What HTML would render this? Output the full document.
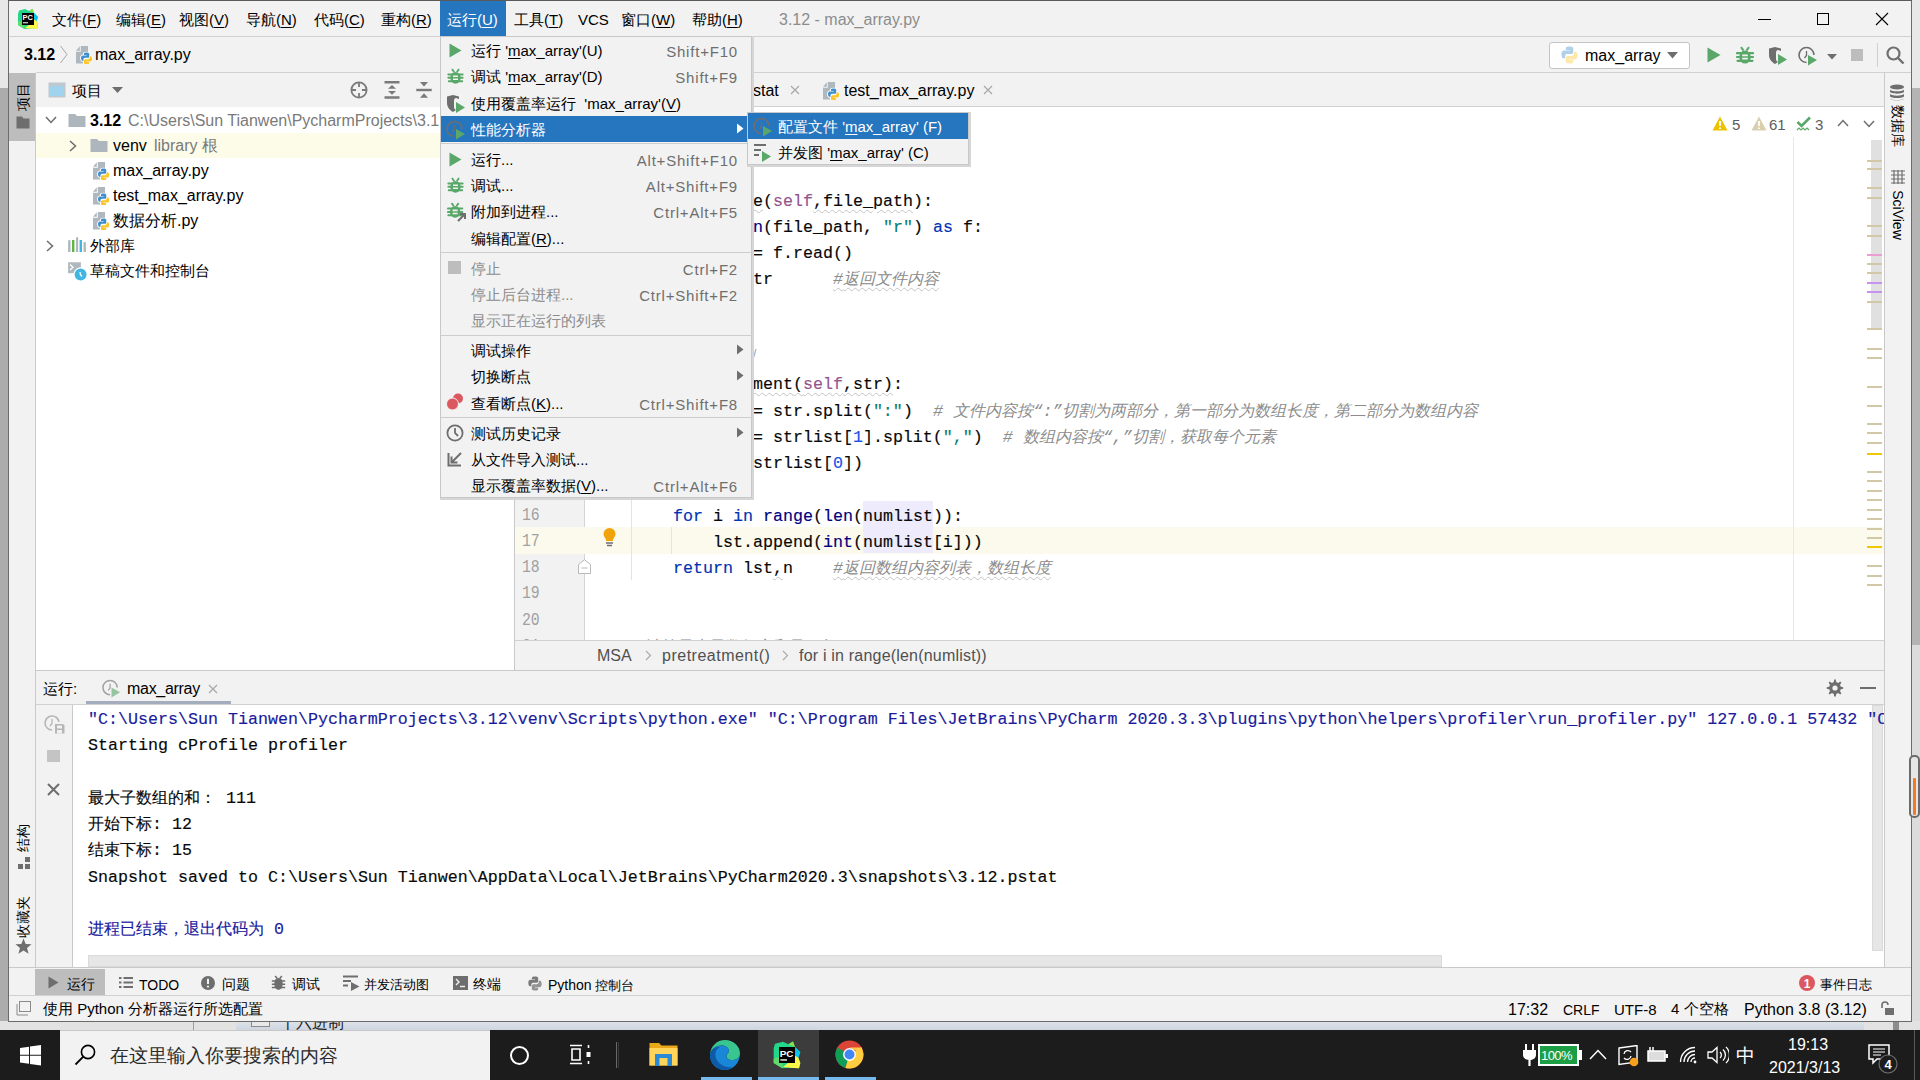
<!DOCTYPE html>
<html><head><meta charset="utf-8">
<style>
*{box-sizing:border-box;margin:0;padding:0}
html,body{width:1920px;height:1080px;overflow:hidden;background:#e9e9e9}
body{position:relative;font-family:"Liberation Sans",sans-serif;font-size:15px;color:#000}
.a{position:absolute}
.mono{font-family:"Liberation Mono",monospace}
.t{position:absolute;white-space:pre;line-height:1}
.u{position:absolute;white-space:pre;font-size:15px;line-height:20px;margin-top:1px}
u{text-decoration:underline;text-underline-offset:2px}
.code{position:absolute;white-space:pre;font-size:16.67px;line-height:26.25px;color:#080808;-webkit-text-stroke:0.15px currentColor}
.gut{color:#a0a0a0;font-size:18px;-webkit-text-stroke:0;margin-top:-2px;transform:scaleX(0.82);transform-origin:0 0}
.k{color:#0033b3}.b{color:#000080}.s{color:#0b7b77}.n{color:#1750eb}.c{color:#8c8c8c;font-style:italic;-webkit-text-stroke:0}.self{color:#94558d}.fn{color:#080808}
.hl{background:#edebfc}
.w{text-decoration:underline wavy #c4c4c4;text-decoration-thickness:1px;text-underline-offset:3px}
.cj{font-size:16px}
.mi{position:absolute;left:471px;white-space:pre;font-size:15px;line-height:20px;margin-top:1px}
.ms{position:absolute;right:1182px;white-space:pre;font-size:15px;line-height:20px;color:#6e6e6e;margin-top:2px;letter-spacing:0.8px}
</style></head><body>
<!-- desktop strips -->
<div class="a" style="left:0;top:0;width:8px;height:88px;background:#e8e8e8"></div>
<div class="a" style="left:0;top:88px;width:8px;height:942px;background:#acacac"></div>
<div class="a" style="left:1912px;top:0;width:8px;height:88px;background:#e8e8e8"></div>
<div class="a" style="left:1912px;top:88px;width:8px;height:557px;background:#b4b4b4"></div>
<div class="a" style="left:1912px;top:645px;width:8px;height:385px;background:#dcdcdc"></div>
<div class="a" style="left:0;top:1021px;width:1920px;height:9px;background:#e2e2e2"></div>
<div class="a" style="left:236px;top:1021px;width:1628px;height:9px;background:linear-gradient(#dfe4ea,#cdd5df)"></div>
<div class="a" style="left:1893px;top:1021px;width:6px;height:9px;background:#8c8c8c"></div>
<div class="a" style="left:193px;top:1021px;width:1px;height:9px;background:#8aa0c8"></div>
<div class="a" style="left:251px;top:1021px;width:19px;height:6px;border:1px solid #8a8a8a;border-top:none;background:#e8e8e8"></div>
<div class="a" style="left:280px;top:1012px;width:120px;height:18px;overflow:hidden"><div class="u" style="left:0;top:0;font-size:16px;color:#222">十六进制</div></div>

<!-- window -->
<div class="a" id="win" style="left:8px;top:0;width:1904px;height:1022px;background:#f2f2f2;border:1px solid #6b6b6b;border-top:none"></div>
<!-- title bar bottom -->
<div class="a" style="left:9px;top:36px;width:1902px;height:1px;background:#d1d1d1"></div>
<!-- navbar bottom -->
<div class="a" style="left:36px;top:72px;width:1875px;height:1px;background:#d1d1d1"></div>
<!-- left stripe -->
<div class="a" style="left:35px;top:73px;width:1px;height:894px;background:#c9c9c9"></div>
<!-- right stripe -->
<div class="a" style="left:1884px;top:73px;width:1px;height:894px;background:#c9c9c9"></div>
<!-- project tree white -->
<div class="a" style="left:36px;top:107px;width:478px;height:563px;background:#fff"></div>
<!-- splitter -->
<div class="a" style="left:514px;top:73px;width:1px;height:597px;background:#c9c9c9"></div>
<!-- editor tabs bottom -->
<div class="a" style="left:515px;top:106px;width:1369px;height:1px;background:#d1d1d1"></div>
<!-- editor white -->
<div class="a" style="left:515px;top:107px;width:1369px;height:533px;background:#fff"></div>
<!-- gutter -->
<div class="a" style="left:515px;top:107px;width:69px;height:533px;background:#f2f2f2"></div>
<div class="a" style="left:584px;top:107px;width:1px;height:533px;background:#d5d5d5"></div>
<!-- editor breadcrumb -->
<div class="a" style="left:515px;top:640px;width:1369px;height:1px;background:#d1d1d1"></div>
<!-- run panel header -->
<div class="a" style="left:36px;top:670px;width:1848px;height:1px;background:#c9c9c9"></div>
<div class="a" style="left:36px;top:704px;width:1848px;height:1px;background:#d1d1d1"></div>
<!-- console -->
<div class="a" style="left:73px;top:705px;width:1811px;height:262px;background:#fff"></div>
<div class="a" style="left:72px;top:705px;width:1px;height:262px;background:#c9c9c9"></div>
<!-- bottom bar -->
<div class="a" style="left:9px;top:967px;width:1902px;height:1px;background:#c9c9c9"></div>
<div class="a" style="left:9px;top:995px;width:1902px;height:1px;background:#d1d1d1"></div>




<!-- ===== TITLE BAR ===== -->
<div class="a" style="left:8px;top:0;width:1904px;height:1px;background:#5a5a5a"></div>
<svg class="a" style="left:16px;top:7px" width="24" height="24" viewBox="0 0 24 24">
 <path d="M2 7 L3 3.5 L9 2 L13 4 L16.5 1.8 L18 6 L22 10 L20.5 14 L22 18 L21 22 L14 21.5 L8.5 22 L2 18 Z" fill="#21d789"/>
 <path d="M13 4 L16.5 1.8 L18 6 Z" fill="#8be04e"/>
 <path d="M18 6 L22 10 L20.5 14 L17 12 Z" fill="#07c3f2"/>
 <path d="M17 12 L20.5 14 L22 18 L21 22 L14 21.5 L9 21 L14 17 Z" fill="#fcf84a"/>
 <path d="M2 15 L7 13 L9 21 L8.5 22 L2 18 Z" fill="#62d96b"/>
 <rect x="6" y="6" width="12" height="12" fill="#000"/>
 <text x="6.6" y="13.2" font-family="Liberation Sans" font-weight="bold" font-size="7.4" fill="#fff">PC</text>
 <rect x="7" y="15" width="5" height="1.4" fill="#bbb"/>
</svg>
<div class="u" style="left:52px;top:9px">文件(<u>F</u>)</div>
<div class="u" style="left:116px;top:9px">编辑(<u>E</u>)</div>
<div class="u" style="left:179px;top:9px">视图(<u>V</u>)</div>
<div class="u" style="left:246px;top:9px">导航(<u>N</u>)</div>
<div class="u" style="left:314px;top:9px">代码(<u>C</u>)</div>
<div class="u" style="left:381px;top:9px">重构(<u>R</u>)</div>
<div class="a" style="left:440px;top:1px;width:66px;height:35px;background:#2675bf"></div>
<div class="u" style="left:447px;top:9px;color:#fff">运行(<u>U</u>)</div>
<div class="u" style="left:514px;top:9px">工具(<u>T</u>)</div>
<div class="u" style="left:578px;top:9px">VCS</div>
<div class="u" style="left:621px;top:9px">窗口(<u>W</u>)</div>
<div class="u" style="left:692px;top:9px">帮助(<u>H</u>)</div>
<div class="u" style="left:779px;top:9px;color:#8c8c8c;font-size:16px">3.12 - max_array.py</div>
<div class="a" style="left:1758px;top:19px;width:13px;height:1px;background:#000"></div>
<div class="a" style="left:1817px;top:13px;width:12px;height:12px;border:1px solid #000"></div>
<svg class="a" style="left:1875px;top:12px" width="14" height="14" viewBox="0 0 14 14"><path d="M1 1 L13 13 M13 1 L1 13" stroke="#000" stroke-width="1.1"/></svg>

<!-- ===== NAV BAR ===== -->
<div class="u" style="left:24px;top:44px;font-weight:bold;font-size:16px">3.12</div>
<svg class="a" style="left:59px;top:45px" width="10" height="19" viewBox="0 0 10 19"><path d="M1.5 1 L8 9.5 L1.5 18" stroke="#a8a8a8" fill="none" stroke-width="1"/></svg>
<svg class="a pyf" style="left:75px;top:45px" width="18" height="19" viewBox="0 0 18 19"><g>
   <path d="M5.8 1 H13 V18.5 H1 V6.8 H5.8 Z" fill="#aeb8be"/>
   <path d="M1 5.8 L4.8 1.3 V5.8 Z" fill="#aeb8be"/>
   <g transform="translate(5.3,7.2) scale(0.7)"><g stroke="#fff" stroke-width="2.6">
   <path d="M8.8 0.5 C5 0.5 5.3 2.2 5.3 2.2 V4 H9 V4.6 H3.6 C3.6 4.6 1 4.3 1 8.4 C1 12.5 3.3 12.3 3.3 12.3 H4.6 V10.4 C4.6 10.4 4.5 8.1 6.9 8.1 H10.6 C10.6 8.1 12.8 8.2 12.8 6 V2.4 C12.8 2.4 13.1 0.5 8.8 0.5 Z" fill="#3f8fcf"/>
   <path d="M9.2 17.5 C13 17.5 12.7 15.8 12.7 15.8 V14 H9 V13.4 H14.4 C14.4 13.4 17 13.7 17 9.6 C17 5.5 14.7 5.7 14.7 5.7 H13.4 V7.6 C13.4 7.6 13.5 9.9 11.1 9.9 H7.4 C7.4 9.9 5.2 9.8 5.2 12 V15.6 C5.2 15.6 4.9 17.5 9.2 17.5 Z" fill="#fcc62c"/></g><g>
   <path d="M8.8 0.5 C5 0.5 5.3 2.2 5.3 2.2 V4 H9 V4.6 H3.6 C3.6 4.6 1 4.3 1 8.4 C1 12.5 3.3 12.3 3.3 12.3 H4.6 V10.4 C4.6 10.4 4.5 8.1 6.9 8.1 H10.6 C10.6 8.1 12.8 8.2 12.8 6 V2.4 C12.8 2.4 13.1 0.5 8.8 0.5 Z" fill="#3f8fcf"/>
   <path d="M9.2 17.5 C13 17.5 12.7 15.8 12.7 15.8 V14 H9 V13.4 H14.4 C14.4 13.4 17 13.7 17 9.6 C17 5.5 14.7 5.7 14.7 5.7 H13.4 V7.6 C13.4 7.6 13.5 9.9 11.1 9.9 H7.4 C7.4 9.9 5.2 9.8 5.2 12 V15.6 C5.2 15.6 4.9 17.5 9.2 17.5 Z" fill="#fcc62c"/></g></g></g></svg>
<div class="u" style="left:95px;top:44px;font-size:16px">max_array.py</div>

<div class="a" style="left:1549px;top:42px;width:141px;height:27px;background:#fff;border:1px solid #c4c4c4;border-radius:3px"></div>
<svg class="a" style="left:1560px;top:46px" width="19" height="18" viewBox="0 0 18 18" opacity="0.4"><g>
   <path d="M8.8 0.5 C5 0.5 5.3 2.2 5.3 2.2 V4 H9 V4.6 H3.6 C3.6 4.6 1 4.3 1 8.4 C1 12.5 3.3 12.3 3.3 12.3 H4.6 V10.4 C4.6 10.4 4.5 8.1 6.9 8.1 H10.6 C10.6 8.1 12.8 8.2 12.8 6 V2.4 C12.8 2.4 13.1 0.5 8.8 0.5 Z" fill="#3f8fcf"/>
   <path d="M9.2 17.5 C13 17.5 12.7 15.8 12.7 15.8 V14 H9 V13.4 H14.4 C14.4 13.4 17 13.7 17 9.6 C17 5.5 14.7 5.7 14.7 5.7 H13.4 V7.6 C13.4 7.6 13.5 9.9 11.1 9.9 H7.4 C7.4 9.9 5.2 9.8 5.2 12 V15.6 C5.2 15.6 4.9 17.5 9.2 17.5 Z" fill="#fcc62c"/></g></svg>
<div class="u" style="left:1585px;top:45px;font-size:16px">max_array</div>
<svg class="a" style="left:1667px;top:52px" width="12" height="7" viewBox="0 0 12 7"><path d="M0 0 H11 L5.5 6.5 Z" fill="#6e6e6e"/></svg>
<svg class="a" style="left:1707px;top:47px" width="14" height="16" viewBox="0 0 14 16"><path d="M0.5 0.5 L13.5 8 L0.5 15.5 Z" fill="#59a869"/></svg>
<svg class="a" style="left:1736px;top:46px" width="18" height="19" viewBox="0 0 18 19"><g>
   <path d="M5 1.2 L7.6 4.6 M13 1.2 L10.4 4.6" stroke="#59a869" stroke-width="2"/>
   <ellipse cx="9" cy="11" rx="5.8" ry="6.6" fill="#59a869"/>
   <path d="M1 7.2 H17 M1 11 H17 M1.5 14.8 H16.5" stroke="#59a869" stroke-width="2.2" stroke-linecap="round"/>
   <path d="M6.2 9.3 H11.8 M6.2 12.7 H11.8" stroke="#f2f2f2" stroke-width="1.7"/></g></svg>
<svg class="a" style="left:1768px;top:46px" width="20" height="20" viewBox="0 0 20 20"><g>
   <path d="M1 2.5 L7 1 L13 2.5 V5 L10 4 C8.5 4 8 5.5 8 7 V13 C8 14.5 9 15.5 10 16 L7 18 C3.5 16 1 13 1 9 Z" fill="#6e6e6e"/>
   <path d="M10 8 L19 13.5 L10 19 Z" fill="#59a869"/></g></svg>
<svg class="a" style="left:1798px;top:46px" width="20" height="20" viewBox="0 0 20 20"><g>
   <path d="M8.5 16.5 A7.5 7.5 0 1 1 16 9" stroke="#6e6e6e" stroke-width="1.6" fill="none"/>
   <path d="M8.5 5 V9.5 L6.5 12" stroke="#6e6e6e" stroke-width="1.3" fill="none"/>
   <path d="M10 9 L19 14 L10 19.5 Z" fill="#59a869"/></g></svg>
<svg class="a" style="left:1827px;top:54px" width="10" height="6" viewBox="0 0 10 6"><path d="M0 0 H10 L5 5.5 Z" fill="#6e6e6e"/></svg>
<div class="a" style="left:1851px;top:49px;width:12px;height:12px;background:#bdbdbd"></div>
<div class="a" style="left:1877px;top:43px;width:1px;height:24px;background:#d0d0d0"></div>
<svg class="a" style="left:1886px;top:46px" width="19" height="19" viewBox="0 0 19 19"><circle cx="7.5" cy="7.5" r="6" stroke="#6e6e6e" stroke-width="2.2" fill="none"/><path d="M12 12 L17.5 17.5" stroke="#6e6e6e" stroke-width="2.4"/></svg>

<!-- ===== LEFT STRIPE ===== -->
<div class="a" style="left:9px;top:73px;width:26px;height:68px;background:#bdbdbd"></div>
<div class="u" style="left:-1px;top:86px;width:48px;height:20px;text-align:center;transform:rotate(-90deg);transform-origin:24px 10px;font-size:14px;line-height:20px">项目</div>
<svg class="a" style="left:16px;top:116px" width="14" height="13" viewBox="0 0 14 13"><path d="M0.5 0.5 H6 L7.5 2.5 H13.5 V12.5 H0.5 Z" fill="#6e6e6e"/></svg>
<div class="u" style="left:-1px;top:827px;width:48px;height:20px;text-align:center;transform:rotate(-90deg);transform-origin:24px 10px;font-size:14px;line-height:20px">结构</div>
<svg class="a" style="left:17px;top:856px" width="14" height="14" viewBox="0 0 14 14"><rect x="1" y="8" width="5" height="5" fill="#6e6e6e"/><rect x="8" y="8" width="5" height="5" fill="#6e6e6e"/><rect x="8" y="1" width="5" height="5" fill="#6e6e6e"/></svg>
<div class="u" style="left:-1px;top:906px;width:48px;height:20px;text-align:center;transform:rotate(-90deg);transform-origin:24px 10px;font-size:14px;line-height:20px">收藏夹</div>
<svg class="a" style="left:15px;top:938px" width="17" height="17" viewBox="0 0 17 17"><path d="M8.5 0.5 L10.7 6 L16.5 6.2 L12 9.9 L13.6 15.8 L8.5 12.5 L3.4 15.8 L5 9.9 L0.5 6.2 L6.3 6 Z" fill="#6e6e6e"/></svg>

<!-- ===== RIGHT STRIPE ===== -->
<svg class="a" style="left:1889px;top:84px" width="16" height="17" viewBox="0 0 16 17"><ellipse cx="8" cy="3" rx="7" ry="2.6" fill="#6e6e6e"/><path d="M1 5.2 C1 8 15 8 15 5.2 V7.6 C15 10.4 1 10.4 1 7.6 Z" fill="#6e6e6e"/><path d="M1 9.6 C1 12.4 15 12.4 15 9.6 V12 C15 14.8 1 14.8 1 12 Z" fill="#6e6e6e"/><path d="M1 14 C1 16.8 15 16.8 15 14 V14.3 C15 17 1 17 1 14.3 Z" fill="#6e6e6e"/></svg>
<div class="u" style="left:1874px;top:115px;width:48px;height:20px;text-align:center;transform:rotate(90deg);transform-origin:24px 10px;font-size:14px;line-height:20px">数据库</div>
<svg class="a" style="left:1891px;top:170px" width="14" height="14" viewBox="0 0 14 14"><path d="M0 1 H14 M0 5 H14 M0 9 H14 M0 13 H14 M3 0 V14 M7 0 V14 M11 0 V14" stroke="#6e6e6e" stroke-width="1.2"/></svg>
<div class="u" style="left:1868px;top:204px;width:60px;height:20px;text-align:center;transform:rotate(90deg);transform-origin:30px 10px;font-size:14px;line-height:20px">SciView</div>

<!-- ===== PROJECT PANEL ===== -->
<svg class="a" style="left:48px;top:82px" width="18" height="16" viewBox="0 0 18 16"><rect x="0.5" y="0.5" width="17" height="15" fill="#c0c8cf"/><rect x="2" y="4" width="14" height="10" fill="#9fd3ee"/></svg>
<div class="u" style="left:72px;top:80px">项目</div>
<svg class="a" style="left:112px;top:87px" width="11" height="7" viewBox="0 0 11 7"><path d="M0 0 H11 L5.5 6 Z" fill="#6e6e6e"/></svg>
<svg class="a" style="left:340px;top:74px" width="100" height="32" viewBox="340 74 100 32">
 <g fill="none" stroke="#7a7a7a" stroke-width="1.8"><circle cx="359" cy="90" r="7.6"/><path d="M359 82.5 V87 M359 93 V97.5 M351.5 90 H356 M362 90 H366.5"/></g>
 <path d="M384.5 82.3 H399.5 M384.5 97.5 H399.5" stroke="#7a7a7a" stroke-width="2.6"/>
 <path d="M388 88.8 H396 L392 85 Z M388 91 H396 L392 94.8 Z" fill="#7a7a7a"/>
 <path d="M416.3 90 H431.7" stroke="#7a7a7a" stroke-width="2.4"/>
 <path d="M420 82 H428 L424 86.6 Z M420 97.8 H428 L424 93.2 Z" fill="#7a7a7a"/>
</svg>
<div class="a" style="left:36px;top:133px;width:478px;height:25px;background:#fcfce8"></div>
<svg class="a" style="left:45px;top:116px" width="12" height="8" viewBox="0 0 12 8"><path d="M1 1 L6 6.5 L11 1" stroke="#6e6e6e" stroke-width="1.5" fill="none"/></svg>
<svg class="a" style="left:68px;top:113px" width="18" height="15" viewBox="0 0 18 15"><g>
   <path d="M0.5 1 H7 L9 3 H17.5 V14 H0.5 Z" fill="#adb6bc"/></g></svg>
<div class="u" style="left:90px;top:110px;font-weight:bold;font-size:16px">3.12</div>
<div class="u" style="left:128px;top:110px;font-size:16px;color:#7a7a7a">C:\Users\Sun Tianwen\PycharmProjects\3.12</div>

<svg class="a" style="left:69px;top:140px" width="8" height="12" viewBox="0 0 8 12"><path d="M1 1 L6.5 6 L1 11" stroke="#6e6e6e" stroke-width="1.5" fill="none"/></svg>
<svg class="a" style="left:90px;top:138px" width="18" height="15" viewBox="0 0 18 15"><g>
   <path d="M0.5 1 H7 L9 3 H17.5 V14 H0.5 Z" fill="#adb6bc"/></g></svg>
<div class="u" style="left:113px;top:135px;font-size:16px">venv</div>
<div class="u" style="left:154px;top:135px;font-size:16px;color:#7a7a7a">library 根</div>

<svg class="a" style="left:92px;top:161px" width="18" height="19" viewBox="0 0 18 19"><g>
   <path d="M5.8 1 H13 V18.5 H1 V6.8 H5.8 Z" fill="#aeb8be"/>
   <path d="M1 5.8 L4.8 1.3 V5.8 Z" fill="#aeb8be"/>
   <g transform="translate(5.3,7.2) scale(0.7)"><g stroke="#fff" stroke-width="2.6">
   <path d="M8.8 0.5 C5 0.5 5.3 2.2 5.3 2.2 V4 H9 V4.6 H3.6 C3.6 4.6 1 4.3 1 8.4 C1 12.5 3.3 12.3 3.3 12.3 H4.6 V10.4 C4.6 10.4 4.5 8.1 6.9 8.1 H10.6 C10.6 8.1 12.8 8.2 12.8 6 V2.4 C12.8 2.4 13.1 0.5 8.8 0.5 Z" fill="#3f8fcf"/>
   <path d="M9.2 17.5 C13 17.5 12.7 15.8 12.7 15.8 V14 H9 V13.4 H14.4 C14.4 13.4 17 13.7 17 9.6 C17 5.5 14.7 5.7 14.7 5.7 H13.4 V7.6 C13.4 7.6 13.5 9.9 11.1 9.9 H7.4 C7.4 9.9 5.2 9.8 5.2 12 V15.6 C5.2 15.6 4.9 17.5 9.2 17.5 Z" fill="#fcc62c"/></g><g>
   <path d="M8.8 0.5 C5 0.5 5.3 2.2 5.3 2.2 V4 H9 V4.6 H3.6 C3.6 4.6 1 4.3 1 8.4 C1 12.5 3.3 12.3 3.3 12.3 H4.6 V10.4 C4.6 10.4 4.5 8.1 6.9 8.1 H10.6 C10.6 8.1 12.8 8.2 12.8 6 V2.4 C12.8 2.4 13.1 0.5 8.8 0.5 Z" fill="#3f8fcf"/>
   <path d="M9.2 17.5 C13 17.5 12.7 15.8 12.7 15.8 V14 H9 V13.4 H14.4 C14.4 13.4 17 13.7 17 9.6 C17 5.5 14.7 5.7 14.7 5.7 H13.4 V7.6 C13.4 7.6 13.5 9.9 11.1 9.9 H7.4 C7.4 9.9 5.2 9.8 5.2 12 V15.6 C5.2 15.6 4.9 17.5 9.2 17.5 Z" fill="#fcc62c"/></g></g></g></svg>
<div class="u" style="left:113px;top:160px;font-size:16px">max_array.py</div>
<svg class="a" style="left:92px;top:186px" width="18" height="19" viewBox="0 0 18 19"><g>
   <path d="M5.8 1 H13 V18.5 H1 V6.8 H5.8 Z" fill="#aeb8be"/>
   <path d="M1 5.8 L4.8 1.3 V5.8 Z" fill="#aeb8be"/>
   <g transform="translate(5.3,7.2) scale(0.7)"><g stroke="#fff" stroke-width="2.6">
   <path d="M8.8 0.5 C5 0.5 5.3 2.2 5.3 2.2 V4 H9 V4.6 H3.6 C3.6 4.6 1 4.3 1 8.4 C1 12.5 3.3 12.3 3.3 12.3 H4.6 V10.4 C4.6 10.4 4.5 8.1 6.9 8.1 H10.6 C10.6 8.1 12.8 8.2 12.8 6 V2.4 C12.8 2.4 13.1 0.5 8.8 0.5 Z" fill="#3f8fcf"/>
   <path d="M9.2 17.5 C13 17.5 12.7 15.8 12.7 15.8 V14 H9 V13.4 H14.4 C14.4 13.4 17 13.7 17 9.6 C17 5.5 14.7 5.7 14.7 5.7 H13.4 V7.6 C13.4 7.6 13.5 9.9 11.1 9.9 H7.4 C7.4 9.9 5.2 9.8 5.2 12 V15.6 C5.2 15.6 4.9 17.5 9.2 17.5 Z" fill="#fcc62c"/></g><g>
   <path d="M8.8 0.5 C5 0.5 5.3 2.2 5.3 2.2 V4 H9 V4.6 H3.6 C3.6 4.6 1 4.3 1 8.4 C1 12.5 3.3 12.3 3.3 12.3 H4.6 V10.4 C4.6 10.4 4.5 8.1 6.9 8.1 H10.6 C10.6 8.1 12.8 8.2 12.8 6 V2.4 C12.8 2.4 13.1 0.5 8.8 0.5 Z" fill="#3f8fcf"/>
   <path d="M9.2 17.5 C13 17.5 12.7 15.8 12.7 15.8 V14 H9 V13.4 H14.4 C14.4 13.4 17 13.7 17 9.6 C17 5.5 14.7 5.7 14.7 5.7 H13.4 V7.6 C13.4 7.6 13.5 9.9 11.1 9.9 H7.4 C7.4 9.9 5.2 9.8 5.2 12 V15.6 C5.2 15.6 4.9 17.5 9.2 17.5 Z" fill="#fcc62c"/></g></g></g></svg>
<div class="u" style="left:113px;top:185px;font-size:16px">test_max_array.py</div>
<svg class="a" style="left:92px;top:211px" width="18" height="19" viewBox="0 0 18 19"><g>
   <path d="M5.8 1 H13 V18.5 H1 V6.8 H5.8 Z" fill="#aeb8be"/>
   <path d="M1 5.8 L4.8 1.3 V5.8 Z" fill="#aeb8be"/>
   <g transform="translate(5.3,7.2) scale(0.7)"><g stroke="#fff" stroke-width="2.6">
   <path d="M8.8 0.5 C5 0.5 5.3 2.2 5.3 2.2 V4 H9 V4.6 H3.6 C3.6 4.6 1 4.3 1 8.4 C1 12.5 3.3 12.3 3.3 12.3 H4.6 V10.4 C4.6 10.4 4.5 8.1 6.9 8.1 H10.6 C10.6 8.1 12.8 8.2 12.8 6 V2.4 C12.8 2.4 13.1 0.5 8.8 0.5 Z" fill="#3f8fcf"/>
   <path d="M9.2 17.5 C13 17.5 12.7 15.8 12.7 15.8 V14 H9 V13.4 H14.4 C14.4 13.4 17 13.7 17 9.6 C17 5.5 14.7 5.7 14.7 5.7 H13.4 V7.6 C13.4 7.6 13.5 9.9 11.1 9.9 H7.4 C7.4 9.9 5.2 9.8 5.2 12 V15.6 C5.2 15.6 4.9 17.5 9.2 17.5 Z" fill="#fcc62c"/></g><g>
   <path d="M8.8 0.5 C5 0.5 5.3 2.2 5.3 2.2 V4 H9 V4.6 H3.6 C3.6 4.6 1 4.3 1 8.4 C1 12.5 3.3 12.3 3.3 12.3 H4.6 V10.4 C4.6 10.4 4.5 8.1 6.9 8.1 H10.6 C10.6 8.1 12.8 8.2 12.8 6 V2.4 C12.8 2.4 13.1 0.5 8.8 0.5 Z" fill="#3f8fcf"/>
   <path d="M9.2 17.5 C13 17.5 12.7 15.8 12.7 15.8 V14 H9 V13.4 H14.4 C14.4 13.4 17 13.7 17 9.6 C17 5.5 14.7 5.7 14.7 5.7 H13.4 V7.6 C13.4 7.6 13.5 9.9 11.1 9.9 H7.4 C7.4 9.9 5.2 9.8 5.2 12 V15.6 C5.2 15.6 4.9 17.5 9.2 17.5 Z" fill="#fcc62c"/></g></g></g></svg>
<div class="u" style="left:113px;top:210px;font-size:16px">数据分析.py</div>

<svg class="a" style="left:46px;top:240px" width="8" height="12" viewBox="0 0 8 12"><path d="M1 1 L6.5 6 L1 11" stroke="#6e6e6e" stroke-width="1.5" fill="none"/></svg>
<svg class="a" style="left:60px;top:230px" width="40" height="30" viewBox="60 230 40 30"><rect x="68.1" y="240.2" width="2.4" height="11.8" fill="#aeb8be"/><rect x="72" y="240" width="2.4" height="12" fill="#62b543"/><rect x="76" y="237.3" width="2.2" height="14.7" fill="#aeb8be"/><rect x="79.6" y="240" width="2.4" height="12" fill="#40b6e0"/><rect x="83.5" y="242.2" width="2.4" height="9.8" fill="#aeb8be"/></svg>
<div class="u" style="left:90px;top:235px">外部库</div>
<svg class="a" style="left:60px;top:255px" width="40" height="30" viewBox="60 255 40 30"><rect x="68.1" y="262.3" width="12.8" height="10.9" fill="#aeb8be"/><path d="M70 264.5 L73 267.2 L70 270" stroke="#fff" stroke-width="1.3" fill="none"/><circle cx="80.6" cy="274.5" r="6.6" fill="#40b6e0" stroke="#fff" stroke-width="1.2"/><path d="M80 272 Q79.8 275 82 276.5" stroke="#fff" stroke-width="1.3" fill="none"/></svg>
<div class="u" style="left:90px;top:260px">草稿文件和控制台</div>

<!-- ===== EDITOR ===== -->
<div class="a" style="left:515px;top:527px;width:1369px;height:27px;background:#fcfaed"></div>
<div class="a" style="left:863px;top:501px;width:70px;height:52px;background:#edebfc"></div>
<div class="a" style="left:631px;top:500px;width:1px;height:80px;background:#e3e3e3"></div>
<div class="a" style="left:671px;top:527px;width:1px;height:27px;background:#e3e3e3"></div>
<div class="a" style="left:515px;top:107px;width:1369px;height:533px;overflow:hidden">
 <div class="code mono" style="left:78px;top:2.75px"><span class="k">class</span> MSA:


    <span class="k">def</span> <span class="fn w">read_file</span>(<span class="self">self</span><span class="w">,file_path</span>):
        <span class="k">with</span> <span class="b">open</span>(file_path, <span class="s">"r"</span>) <span class="k">as</span> f:
            str = f.read()
        <span class="k">return</span> str      <span class="c w">#<span class="cj">返回文件内容</span></span>


    <span class="c">#<span class="cj">数据预处理</span></span>
    <span class="k">def</span> <span class="w"><span class="fn">pretreatment</span>(<span class="self">self</span>,str)</span>:
        strlist = str.split(<span class="s">":"</span>)  <span class="c"># <span class="cj">文件内容按“</span>:<span class="cj">”切割为两部分，第一部分为数组长度，第二部分为数组内容</span></span>
        numlist = strlist[<span class="n">1</span>].split(<span class="s">","</span>)  <span class="c"># <span class="cj">数组内容按“</span>,<span class="cj">”切割，获取每个元素</span></span>
        n = <span class="b">int</span>(strlist[<span class="n">0</span>])
        lst = []
        <span class="k">for</span> i <span class="k">in</span> <span class="b">range</span>(<span class="b">len</span>(<span class="hl">numlist</span>)):
            lst.append(<span class="b">int</span>(<span class="hl">numlist</span>[i]))
        <span class="k">return</span> lst<span class="w">,</span>n    <span class="c w">#<span class="cj">返回数组内容列表，数组长度</span></span>


    <span class="c">#<span class="cj">计算最大子数组之和及下标</span></span></div>
 <div class="code mono gut" style="left:7px;top:2.75px">1
2
3
4
5
6
7
8
9
10
11
12
13
14
15
16
17
18
19
20
21</div>
</div>
<svg class="a" style="left:601px;top:527px" width="17" height="20" viewBox="0 0 17 20"><circle cx="8.5" cy="7" r="6" fill="#f0a30a"/><path d="M5 12 H12 V14 H5 Z" fill="#f0a30a"/><path d="M5 16 H12 M6 18.5 H11" stroke="#6e6e6e" stroke-width="1.4"/></svg>
<svg class="a" style="left:578px;top:559px" width="13" height="15" viewBox="0 0 13 15"><path d="M0.5 5.5 L6.5 0.7 L12.5 5.5 V14.5 H0.5 Z" fill="#fff" stroke="#b8b8b8"/><path d="M3.5 9 H9.5" stroke="#b8b8b8"/></svg>
<svg class="a" style="left:752px;top:348px" width="5" height="11" viewBox="0 0 5 11"><path d="M4 1 L1.5 10" stroke="#9fb3d0" stroke-width="1.2"/></svg>
<!-- editor tabs -->
<div class="u" style="left:753px;top:80px;font-size:16px">stat</div>
<svg class="a" style="left:790px;top:85px" width="10" height="10" viewBox="0 0 10 10"><path d="M1 1 L9 9 M9 1 L1 9" stroke="#a8a8a8" stroke-width="1.2"/></svg>
<svg class="a" style="left:822px;top:81px" width="18" height="19" viewBox="0 0 18 19"><g>
   <path d="M5.8 1 H13 V18.5 H1 V6.8 H5.8 Z" fill="#aeb8be"/>
   <path d="M1 5.8 L4.8 1.3 V5.8 Z" fill="#aeb8be"/>
   <g transform="translate(5.3,7.2) scale(0.7)"><g stroke="#fff" stroke-width="2.6">
   <path d="M8.8 0.5 C5 0.5 5.3 2.2 5.3 2.2 V4 H9 V4.6 H3.6 C3.6 4.6 1 4.3 1 8.4 C1 12.5 3.3 12.3 3.3 12.3 H4.6 V10.4 C4.6 10.4 4.5 8.1 6.9 8.1 H10.6 C10.6 8.1 12.8 8.2 12.8 6 V2.4 C12.8 2.4 13.1 0.5 8.8 0.5 Z" fill="#3f8fcf"/>
   <path d="M9.2 17.5 C13 17.5 12.7 15.8 12.7 15.8 V14 H9 V13.4 H14.4 C14.4 13.4 17 13.7 17 9.6 C17 5.5 14.7 5.7 14.7 5.7 H13.4 V7.6 C13.4 7.6 13.5 9.9 11.1 9.9 H7.4 C7.4 9.9 5.2 9.8 5.2 12 V15.6 C5.2 15.6 4.9 17.5 9.2 17.5 Z" fill="#fcc62c"/></g><g>
   <path d="M8.8 0.5 C5 0.5 5.3 2.2 5.3 2.2 V4 H9 V4.6 H3.6 C3.6 4.6 1 4.3 1 8.4 C1 12.5 3.3 12.3 3.3 12.3 H4.6 V10.4 C4.6 10.4 4.5 8.1 6.9 8.1 H10.6 C10.6 8.1 12.8 8.2 12.8 6 V2.4 C12.8 2.4 13.1 0.5 8.8 0.5 Z" fill="#3f8fcf"/>
   <path d="M9.2 17.5 C13 17.5 12.7 15.8 12.7 15.8 V14 H9 V13.4 H14.4 C14.4 13.4 17 13.7 17 9.6 C17 5.5 14.7 5.7 14.7 5.7 H13.4 V7.6 C13.4 7.6 13.5 9.9 11.1 9.9 H7.4 C7.4 9.9 5.2 9.8 5.2 12 V15.6 C5.2 15.6 4.9 17.5 9.2 17.5 Z" fill="#fcc62c"/></g></g></g></svg>
<div class="u" style="left:844px;top:80px;font-size:16px">test_max_array.py</div>
<svg class="a" style="left:983px;top:85px" width="10" height="10" viewBox="0 0 10 10"><path d="M1 1 L9 9 M9 1 L1 9" stroke="#a8a8a8" stroke-width="1.2"/></svg>
<!-- inspections widget -->
<svg class="a" style="left:1712px;top:116px" width="16" height="15" viewBox="0 0 16 15"><path d="M8 0.5 L15.5 14.5 H0.5 Z" fill="#edc200"/><path d="M8 5 V10 M8 11.5 V13" stroke="#fff" stroke-width="1.8"/></svg>
<div class="u" style="left:1732px;top:114px;color:#5c5c5c">5</div>
<svg class="a" style="left:1751px;top:116px" width="16" height="15" viewBox="0 0 16 15"><path d="M8 0.5 L15.5 14.5 H0.5 Z" fill="#d9cfae"/><path d="M8 5 V10 M8 11.5 V13" stroke="#fff" stroke-width="1.8"/></svg>
<div class="u" style="left:1769px;top:114px;color:#5c5c5c">61</div>
<svg class="a" style="left:1796px;top:116px" width="17" height="16" viewBox="0 0 17 16"><path d="M1.5 6 L5.5 10 L14 1.5" stroke="#59a869" stroke-width="2.6" fill="none"/><path d="M1 14 L3 12 L5 14 L7 12 L9 14 L11 12 L13 14" stroke="#59a869" stroke-width="1.1" fill="none"/></svg>
<div class="u" style="left:1815px;top:114px;color:#5c5c5c">3</div>
<svg class="a" style="left:1837px;top:119px" width="12" height="8" viewBox="0 0 12 8"><path d="M1 7 L6 1.5 L11 7" stroke="#6e6e6e" stroke-width="1.5" fill="none"/></svg>
<svg class="a" style="left:1863px;top:120px" width="12" height="8" viewBox="0 0 12 8"><path d="M1 1 L6 6.5 L11 1" stroke="#6e6e6e" stroke-width="1.5" fill="none"/></svg>
<div class="a" style="left:1793px;top:137px;width:1px;height:503px;background:#e8e8e8"></div>
<!-- error stripe -->
<div class="a" style="left:1871px;top:140px;width:11px;height:188px;background:#e0e0e0"></div>
<div class="a" style="left:1867px;top:160px;width:15px;height:2px;background:#d2c8a6"></div>
<div class="a" style="left:1867px;top:168px;width:15px;height:2px;background:#d2c8a6"></div>
<div class="a" style="left:1867px;top:187px;width:15px;height:2px;background:#d2c8a6"></div>
<div class="a" style="left:1867px;top:197px;width:15px;height:2px;background:#d2c8a6"></div>
<div class="a" style="left:1867px;top:225px;width:15px;height:2px;background:#d2c8a6"></div>
<div class="a" style="left:1867px;top:235px;width:15px;height:2px;background:#d2c8a6"></div>
<div class="a" style="left:1867px;top:254px;width:15px;height:2px;background:#ec9ed0"></div>
<div class="a" style="left:1867px;top:263px;width:15px;height:2px;background:#d2c8a6"></div>
<div class="a" style="left:1867px;top:272px;width:15px;height:2px;background:#d2c8a6"></div>
<div class="a" style="left:1867px;top:282px;width:15px;height:2px;background:#c694f0"></div>
<div class="a" style="left:1867px;top:291px;width:15px;height:2px;background:#c694f0"></div>
<div class="a" style="left:1867px;top:301px;width:15px;height:2px;background:#d2c8a6"></div>
<div class="a" style="left:1867px;top:328px;width:15px;height:2px;background:#d2c8a6"></div>
<div class="a" style="left:1867px;top:348px;width:15px;height:2px;background:#d2c8a6"></div>
<div class="a" style="left:1867px;top:357px;width:15px;height:2px;background:#d2c8a6"></div>
<div class="a" style="left:1867px;top:386px;width:15px;height:2px;background:#d2c8a6"></div>
<div class="a" style="left:1867px;top:405px;width:15px;height:2px;background:#d2c8a6"></div>
<div class="a" style="left:1867px;top:423px;width:15px;height:2px;background:#d2c8a6"></div>
<div class="a" style="left:1867px;top:432px;width:15px;height:2px;background:#d2c8a6"></div>
<div class="a" style="left:1867px;top:442px;width:15px;height:2px;background:#d2c8a6"></div>
<div class="a" style="left:1867px;top:453px;width:15px;height:2px;background:#f0c800"></div>
<div class="a" style="left:1867px;top:471px;width:15px;height:2px;background:#d2c8a6"></div>
<div class="a" style="left:1867px;top:480px;width:15px;height:2px;background:#d2c8a6"></div>
<div class="a" style="left:1867px;top:490px;width:15px;height:2px;background:#d2c8a6"></div>
<div class="a" style="left:1867px;top:499px;width:15px;height:2px;background:#d2c8a6"></div>
<div class="a" style="left:1867px;top:509px;width:15px;height:2px;background:#d2c8a6"></div>
<div class="a" style="left:1867px;top:518px;width:15px;height:2px;background:#d2c8a6"></div>
<div class="a" style="left:1867px;top:528px;width:15px;height:2px;background:#d2c8a6"></div>
<div class="a" style="left:1867px;top:537px;width:15px;height:2px;background:#d2c8a6"></div>
<div class="a" style="left:1867px;top:546px;width:15px;height:2px;background:#f0c800"></div>
<div class="a" style="left:1867px;top:565px;width:15px;height:2px;background:#d2c8a6"></div>
<div class="a" style="left:1867px;top:575px;width:15px;height:2px;background:#d2c8a6"></div>
<div class="a" style="left:1867px;top:584px;width:15px;height:2px;background:#d2c8a6"></div>

<!-- editor breadcrumbs -->
<div class="u" style="left:597px;top:645px;color:#505050;font-size:16px">MSA</div>
<svg class="a" style="left:645px;top:650px" width="7" height="11" viewBox="0 0 7 11"><path d="M1 1 L5.5 5.5 L1 10" stroke="#a8a8a8" stroke-width="1.1" fill="none"/></svg>
<div class="u" style="left:662px;top:645px;color:#505050;font-size:16px;letter-spacing:0.5px">pretreatment()</div>
<svg class="a" style="left:782px;top:650px" width="7" height="11" viewBox="0 0 7 11"><path d="M1 1 L5.5 5.5 L1 10" stroke="#a8a8a8" stroke-width="1.1" fill="none"/></svg>
<div class="u" style="left:799px;top:645px;color:#505050;font-size:16px;letter-spacing:0.2px">for i in range(len(numlist))</div>

<!-- ===== RUN PANEL ===== -->
<div class="u" style="left:43px;top:678px">运行:</div>
<svg class="a" style="left:102px;top:679px" width="19" height="19" viewBox="0 0 20 20" opacity="0.6"><g>
   <path d="M8.5 16.5 A7.5 7.5 0 1 1 16 9" stroke="#6e6e6e" stroke-width="1.6" fill="none"/>
   <path d="M8.5 5 V9.5 L6.5 12" stroke="#6e6e6e" stroke-width="1.3" fill="none"/>
   <path d="M10 9 L19 14 L10 19.5 Z" fill="#59a869"/></g></svg>
<div class="u" style="left:127px;top:678px;font-size:16px;letter-spacing:-0.3px">max_array</div>
<svg class="a" style="left:208px;top:684px" width="10" height="10" viewBox="0 0 10 10"><path d="M1 1 L9 9 M9 1 L1 9" stroke="#a8a8a8" stroke-width="1.2"/></svg>
<div class="a" style="left:86px;top:701px;width:145px;height:3px;background:#a3adbd"></div>
<svg class="a" style="left:1826px;top:679px" width="18" height="18" viewBox="0 0 18 18"><path d="M9 1.5 L10.6 1.5 L11 4 L13 5 L15 3.5 L16.2 4.7 L14.8 6.8 L15.6 8.8 L18 9.2 L18 10.8 L15.6 11.2 L14.8 13.2 L16.2 15.3 L15 16.5 L13 15 L11 16 L10.6 18.5 L9 18.5 L8.6 16 L6.6 15 L4.6 16.5 L3.4 15.3 L4.8 13.2 L4 11.2 L1.5 10.8 L1.5 9.2 L4 8.8 L4.8 6.8 L3.4 4.7 L4.6 3.5 L6.6 5 L8.6 4 Z" fill="#6e6e6e" transform="translate(-0.8,-1)"/><circle cx="9" cy="9" r="2.6" fill="#f2f2f2"/></svg>
<div class="a" style="left:1860px;top:687px;width:16px;height:2px;background:#6e6e6e"></div>
<!-- console toolbar -->
<svg class="a" style="left:44px;top:715px" width="21" height="19" viewBox="0 0 21 19" opacity="0.45"><path d="M8 15 A7 7 0 1 1 15 7" stroke="#6e6e6e" stroke-width="1.6" fill="none"/><path d="M8 4 V8.5 L6 11" stroke="#6e6e6e" stroke-width="1.3" fill="none"/><path d="M11 9 H19 L20.5 10.5 V18.5 H11 Z" fill="#6e6e6e"/><rect x="13" y="10.5" width="5" height="3" fill="#f2f2f2"/><rect x="13" y="15" width="5" height="3.5" fill="#f2f2f2"/></svg>
<div class="a" style="left:47px;top:750px;width:13px;height:12px;background:#c4c4c4"></div>
<svg class="a" style="left:47px;top:783px" width="13" height="13" viewBox="0 0 13 13"><path d="M1 1 L12 12 M12 1 L1 12" stroke="#6e6e6e" stroke-width="2"/></svg>
<div class="a" style="left:88px;top:955px;width:1354px;height:12px;background:#e6e6e6;border:1px solid #dadada"></div>
<div class="a" style="left:1872px;top:705px;width:11px;height:246px;background:#e6e6e6;border:1px solid #dadada"></div>
<div class="a" style="left:1871px;top:705px;width:13px;height:262px;background:transparent"></div>
<div class="a" style="left:73px;top:705px;width:1811px;height:262px;overflow:hidden">
<div class="code mono" style="left:15px;top:2px;line-height:26.25px"><span style="color:#1a1a9c">"C:\Users\Sun Tianwen\PycharmProjects\3.12\venv\Scripts\python.exe" "C:\Program Files\JetBrains\PyCharm 2020.3.3\plugins\python\helpers\profiler\run_profiler.py" 127.0.0.1 57432 "C:\Users</span>
Starting cProfile profiler

<span class="cj">最大子数组的和：</span> 111
<span class="cj">开始下标</span>: 12
<span class="cj">结束下标</span>: 15
Snapshot saved to C:\Users\Sun Tianwen\AppData\Local\JetBrains\PyCharm2020.3\snapshots\3.12.pstat

<span style="color:#1a1a9c"><span class="cj">进程已结束，退出代码为</span> 0</span></div>
</div>
<div class="a" style="left:1884px;top:705px;width:0;height:0"></div>

<!-- ===== BOTTOM TOOL BAR ===== -->
<div class="a" style="left:35px;top:969px;width:70px;height:26px;background:#bdbdbd"></div>
<svg class="a" style="left:48px;top:976px" width="11" height="13" viewBox="0 0 11 13"><path d="M0.5 0.5 L10.5 6.5 L0.5 12.5 Z" fill="#6e6e6e"/></svg>
<div class="u" style="left:67px;top:974px;font-size:13.5px">运行</div>
<svg class="a" style="left:119px;top:977px" width="14" height="12" viewBox="0 0 14 12"><path d="M0 1 H2.5 M0 5.5 H2.5 M0 10 H2.5 M4.5 1 H14 M4.5 5.5 H14 M4.5 10 H14" stroke="#6e6e6e" stroke-width="2"/></svg>
<div class="u" style="left:139px;top:974px;font-size:14px">TODO</div>
<svg class="a" style="left:201px;top:976px" width="14" height="14" viewBox="0 0 14 14"><circle cx="7" cy="7" r="7" fill="#6e6e6e"/><path d="M7 2.8 V8" stroke="#f2f2f2" stroke-width="2"/><circle cx="7" cy="10.6" r="1.1" fill="#f2f2f2"/></svg>
<div class="u" style="left:222px;top:974px;font-size:13.5px">问题</div>
<svg class="a" style="left:271px;top:975px" width="15" height="16" viewBox="0 0 18 19"><path d="M5 1 L7.5 4 M13 1 L10.5 4" stroke="#6e6e6e" stroke-width="1.8"/><path d="M9 3.5 C12.5 3.5 14 6 14 10 C14 15 12 17.5 9 17.5 C6 17.5 4 15 4 10 C4 6 5.5 3.5 9 3.5 Z" fill="#6e6e6e"/><path d="M1 7 H17 M1 11 H17 M1 15 H17" stroke="#6e6e6e" stroke-width="1.8"/></svg>
<div class="u" style="left:292px;top:974px;font-size:13.5px">调试</div>
<svg class="a" style="left:343px;top:975px" width="17" height="16" viewBox="0 0 17 16"><path d="M0 1.5 H15 M0 6 H8 M0 10.5 H5" stroke="#6e6e6e" stroke-width="2"/><path d="M8 7 L16.5 11.5 L8 16 Z" fill="#6e6e6e"/></svg>
<div class="u" style="left:364px;top:974px;font-size:13.3px">并发活动图</div>
<svg class="a" style="left:453px;top:976px" width="15" height="14" viewBox="0 0 15 14"><rect x="0" y="0" width="15" height="14" fill="#6e6e6e"/><path d="M3 3 L6 6 L3 9" stroke="#f2f2f2" stroke-width="1.4" fill="none"/><path d="M7 10.5 H12" stroke="#f2f2f2" stroke-width="1.4"/></svg>
<div class="u" style="left:473px;top:974px;font-size:13.5px">终端</div>
<svg class="a" style="left:527px;top:976px" width="16" height="15" viewBox="0 0 18 18" opacity="0.9"><path d="M8.8 0.5 C5 0.5 5.3 2.2 5.3 2.2 V4 H9 V4.6 H3.6 C3.6 4.6 1 4.3 1 8.4 C1 12.5 3.3 12.3 3.3 12.3 H4.6 V10.4 C4.6 10.4 4.5 8.1 6.9 8.1 H10.6 C10.6 8.1 12.8 8.2 12.8 6 V2.4 C12.8 2.4 13.1 0.5 8.8 0.5 Z" fill="#6e6e6e"/><path d="M9.2 17.5 C13 17.5 12.7 15.8 12.7 15.8 V14 H9 V13.4 H14.4 C14.4 13.4 17 13.7 17 9.6 C17 5.5 14.7 5.7 14.7 5.7 H13.4 V7.6 C13.4 7.6 13.5 9.9 11.1 9.9 H7.4 C7.4 9.9 5.2 9.8 5.2 12 V15.6 C5.2 15.6 4.9 17.5 9.2 17.5 Z" fill="#8a8a8a"/></svg>
<div class="u" style="left:548px;top:974px;font-size:14px">Python <span style="font-size:13.3px">控制台</span></div>
<svg class="a" style="left:1799px;top:975px" width="16" height="16" viewBox="0 0 16 16"><circle cx="8" cy="8" r="8" fill="#db5860"/><text x="8" y="12.5" text-anchor="middle" font-family="Liberation Sans" font-size="12" font-weight="bold" fill="#fff">1</text></svg>
<div class="u" style="left:1820px;top:974px;font-size:13.3px">事件日志</div>

<!-- ===== STATUS BAR ===== -->
<svg class="a" style="left:16px;top:1001px" width="16" height="15" viewBox="0 0 16 15"><rect x="3.5" y="0.5" width="11" height="10" fill="none" stroke="#8a8a8a"/><path d="M1 3 V14 H12" stroke="#8a8a8a" fill="none"/></svg>
<div class="u" style="left:43px;top:998px">使用 Python 分析器运行所选配置</div>
<div class="u" style="left:1508px;top:999px;font-size:16px">17:32</div>
<div class="u" style="left:1563px;top:999px;font-size:14px">CRLF</div>
<div class="u" style="left:1614px;top:999px;font-size:15px">UTF-8</div>
<div class="u" style="left:1671px;top:998px">4 个空格</div>
<div class="u" style="left:1744px;top:999px;font-size:16px">Python 3.8 (3.12)</div>
<svg class="a" style="left:1880px;top:1001px" width="15" height="15" viewBox="0 0 15 15"><path d="M2 7 V4 A3 3 0 0 1 8 4" stroke="#6e6e6e" stroke-width="1.6" fill="none"/><rect x="5" y="7" width="9" height="7" fill="#6e6e6e"/></svg>

<!-- ===== RUN MENU ===== -->
<div class="a" style="left:440px;top:36px;width:312px;height:462px;background:#f2f2f2;border:1px solid #c8c8c8;box-shadow:1px 1px 0 1px #d6d6d6"></div>
<div class="a" style="left:441px;top:116px;width:306px;height:26px;background:#2675bf"></div>
<div class="a" style="left:441px;top:143px;width:311px;height:1px;background:#cdcdcd"></div>
<div class="a" style="left:441px;top:252px;width:311px;height:1px;background:#cdcdcd"></div>
<div class="a" style="left:441px;top:335px;width:311px;height:1px;background:#cdcdcd"></div>
<div class="a" style="left:441px;top:417px;width:311px;height:1px;background:#cdcdcd"></div>
<div class="mi" style="top:40px">运行 '<u>m</u>ax_array'(U)</div><div class="ms" style="top:40px">Shift+F10</div>
<div class="mi" style="top:66px">调试 '<u>m</u>ax_array'(D)</div><div class="ms" style="top:66px">Shift+F9</div>
<div class="mi" style="top:93px">使用覆盖率运行  'max_array'(<u>V</u>)</div>
<div class="mi" style="top:119px;color:#fff">性能分析器</div>
<div class="mi" style="top:149px">运行...</div><div class="ms" style="top:149px">Alt+Shift+F10</div>
<div class="mi" style="top:175px">调试...</div><div class="ms" style="top:175px">Alt+Shift+F9</div>
<div class="mi" style="top:201px">附加到进程...</div><div class="ms" style="top:201px">Ctrl+Alt+F5</div>
<div class="mi" style="top:228px">编辑配置(<u>R</u>)...</div>
<div class="mi" style="top:258px;color:#8c8c8c">停止</div><div class="ms" style="top:258px">Ctrl+F2</div>
<div class="mi" style="top:284px;color:#8c8c8c">停止后台进程...</div><div class="ms" style="top:284px">Ctrl+Shift+F2</div>
<div class="mi" style="top:310px;color:#8c8c8c">显示正在运行的列表</div>
<div class="mi" style="top:340px">调试操作</div>
<div class="mi" style="top:366px">切换断点</div>
<div class="mi" style="top:393px">查看断点(<u>K</u>)...</div><div class="ms" style="top:393px">Ctrl+Shift+F8</div>
<div class="mi" style="top:423px">测试历史记录</div>
<div class="mi" style="top:449px">从文件导入测试...</div>
<div class="mi" style="top:475px">显示覆盖率数据(<u>V</u>)...</div><div class="ms" style="top:475px">Ctrl+Alt+F6</div>
<svg class="a" style="left:736px;top:123px" width="8" height="11" viewBox="0 0 8 11"><path d="M1 0.5 L7.5 5.5 L1 10.5 Z" fill="#fff"/></svg>
<svg class="a" style="left:736px;top:344px" width="8" height="11" viewBox="0 0 8 11"><path d="M1 0.5 L7.5 5.5 L1 10.5 Z" fill="#6e6e6e"/></svg>
<svg class="a" style="left:736px;top:370px" width="8" height="11" viewBox="0 0 8 11"><path d="M1 0.5 L7.5 5.5 L1 10.5 Z" fill="#6e6e6e"/></svg>
<svg class="a" style="left:736px;top:427px" width="8" height="11" viewBox="0 0 8 11"><path d="M1 0.5 L7.5 5.5 L1 10.5 Z" fill="#6e6e6e"/></svg>
<!-- menu icons -->
<svg class="a" style="left:449px;top:43px" width="13" height="15" viewBox="0 0 13 15"><path d="M0.5 0.5 L12.5 7.5 L0.5 14.5 Z" fill="#59a869"/></svg>
<svg class="a" style="left:447px;top:68px" width="17" height="17" viewBox="0 0 18 19"><g>
   <path d="M5 1.2 L7.6 4.6 M13 1.2 L10.4 4.6" stroke="#59a869" stroke-width="2"/>
   <ellipse cx="9" cy="11" rx="5.8" ry="6.6" fill="#59a869"/>
   <path d="M1 7.2 H17 M1 11 H17 M1.5 14.8 H16.5" stroke="#59a869" stroke-width="2.2" stroke-linecap="round"/>
   <path d="M6.2 9.3 H11.8 M6.2 12.7 H11.8" stroke="#f2f2f2" stroke-width="1.7"/></g></svg>
<svg class="a" style="left:446px;top:94px" width="20" height="20" viewBox="0 0 20 20"><g>
   <path d="M1 2.5 L7 1 L13 2.5 V5 L10 4 C8.5 4 8 5.5 8 7 V13 C8 14.5 9 15.5 10 16 L7 18 C3.5 16 1 13 1 9 Z" fill="#6e6e6e"/>
   <path d="M10 8 L19 13.5 L10 19 Z" fill="#59a869"/></g></svg>
<svg class="a" style="left:446px;top:120px" width="20" height="20" viewBox="0 0 20 20"><g>
   <path d="M8.5 16.5 A7.5 7.5 0 1 1 16 9" stroke="#6e6e6e" stroke-width="1.6" fill="none"/>
   <path d="M8.5 5 V9.5 L6.5 12" stroke="#6e6e6e" stroke-width="1.3" fill="none"/>
   <path d="M10 9 L19 14 L10 19.5 Z" fill="#59a869"/></g></svg>
<svg class="a" style="left:449px;top:152px" width="13" height="15" viewBox="0 0 13 15"><path d="M0.5 0.5 L12.5 7.5 L0.5 14.5 Z" fill="#59a869"/></svg>
<svg class="a" style="left:447px;top:177px" width="17" height="17" viewBox="0 0 18 19"><g>
   <path d="M5 1.2 L7.6 4.6 M13 1.2 L10.4 4.6" stroke="#59a869" stroke-width="2"/>
   <ellipse cx="9" cy="11" rx="5.8" ry="6.6" fill="#59a869"/>
   <path d="M1 7.2 H17 M1 11 H17 M1.5 14.8 H16.5" stroke="#59a869" stroke-width="2.2" stroke-linecap="round"/>
   <path d="M6.2 9.3 H11.8 M6.2 12.7 H11.8" stroke="#f2f2f2" stroke-width="1.7"/></g></svg>
<svg class="a" style="left:447px;top:202px" width="20" height="20" viewBox="0 0 20 20"><g transform="scale(0.9)"><g>
   <path d="M5 1.2 L7.6 4.6 M13 1.2 L10.4 4.6" stroke="#59a869" stroke-width="2"/>
   <ellipse cx="9" cy="11" rx="5.8" ry="6.6" fill="#59a869"/>
   <path d="M1 7.2 H17 M1 11 H17 M1.5 14.8 H16.5" stroke="#59a869" stroke-width="2.2" stroke-linecap="round"/>
   <path d="M6.2 9.3 H11.8 M6.2 12.7 H11.8" stroke="#f2f2f2" stroke-width="1.7"/></g></g><path d="M11 19 L18 12 M13 12 H18 V17" stroke="#6e6e6e" stroke-width="2" fill="none"/></svg>
<div class="a" style="left:448px;top:261px;width:13px;height:13px;background:#bdbdbd"></div>
<svg class="a" style="left:446px;top:393px" width="18" height="18" viewBox="0 0 18 18"><circle cx="12" cy="5.5" r="5" fill="#db5860"/><circle cx="6.5" cy="11" r="6" fill="#db5860" stroke="#f2f2f2" stroke-width="1"/></svg>
<svg class="a" style="left:446px;top:424px" width="18" height="18" viewBox="0 0 18 18"><circle cx="9" cy="9" r="7.6" stroke="#6e6e6e" stroke-width="1.8" fill="none"/><path d="M9 4 V9 L12 12" stroke="#6e6e6e" stroke-width="1.8" fill="none"/></svg>
<svg class="a" style="left:447px;top:451px" width="16" height="16" viewBox="0 0 16 16"><path d="M1.5 2 V14.5 H14" stroke="#6e6e6e" stroke-width="2" fill="none"/><path d="M4.5 11.5 L14 2 M4.5 5.5 V11.5 H10.5" stroke="#6e6e6e" stroke-width="2" fill="none"/></svg>

<!-- ===== SUBMENU ===== -->
<div class="a" style="left:747px;top:112px;width:222px;height:53px;background:#f2f2f2;border:1px solid #c8c8c8;box-shadow:1px 1px 0 1px #d6d6d6"></div>
<div class="a" style="left:748px;top:113px;width:220px;height:26px;background:#2675bf"></div>
<svg class="a" style="left:753px;top:117px" width="20" height="20" viewBox="0 0 20 20"><g>
   <path d="M8.5 16.5 A7.5 7.5 0 1 1 16 9" stroke="#6e6e6e" stroke-width="1.6" fill="none"/>
   <path d="M8.5 5 V9.5 L6.5 12" stroke="#6e6e6e" stroke-width="1.3" fill="none"/>
   <path d="M10 9 L19 14 L10 19.5 Z" fill="#59a869"/></g></svg>
<div class="mi" style="left:778px;top:116px;color:#fff">配置文件 '<u>m</u>ax_array' (F)</div>
<svg class="a" style="left:753px;top:143px" width="20" height="20" viewBox="0 0 20 20"><path d="M1 2 H13 M1 7 H8 M1 12 H6" stroke="#6e6e6e" stroke-width="2"/><path d="M9 8 L18 13.5 L9 19 Z" fill="#59a869"/></svg>
<div class="mi" style="left:778px;top:142px">并发图 '<u>m</u>ax_array' (C)</div>

<!-- taskbar -->
<div class="a" style="left:0;top:1030px;width:1920px;height:50px;background:#1c1c1c"></div>
<div class="a" style="left:60px;top:1030px;width:430px;height:50px;background:#f2f2f2;border-top:1px solid #c8c8c8"></div>

<div class="a" style="left:1909px;top:755px;width:11px;height:63px;border:2px solid #6a6a6a;border-radius:5px;background:#e6e6e6"></div>
<div class="a" style="left:1913px;top:778px;width:3px;height:37px;background:#f47a20;border-radius:1px"></div>
<!-- ===== TASKBAR CONTENT ===== -->
<svg class="a" style="left:20px;top:1045px" width="21" height="21" viewBox="0 0 21 21"><path d="M0 3 L9 1.7 V9.7 H0 Z M10 1.5 L21 0 V9.7 H10 Z M0 10.7 H9 V18.7 L0 17.5 Z M10 10.7 H21 V20.5 L10 19 Z" fill="#fff"/></svg>
<svg class="a" style="left:74px;top:1044px" width="22" height="22" viewBox="0 0 22 22"><circle cx="14" cy="8" r="6.6" stroke="#000" stroke-width="1.6" fill="none"/><path d="M9.3 12.7 L1.5 20.5" stroke="#000" stroke-width="1.8"/></svg>
<div class="u" style="left:110px;top:1045px;font-size:19px;color:#2b2b2b">在这里输入你要搜索的内容</div>
<div class="a" style="left:510px;top:1046px;width:19px;height:19px;border:2.5px solid #fff;border-radius:50%"></div>
<svg class="a" style="left:569px;top:1044px" width="22" height="21" viewBox="0 0 22 21"><path d="M1 1.5 H13 M1 19.5 H13 M3 5 H11 V16 H3 Z" stroke="#fff" stroke-width="1.6" fill="none"/><path d="M19.5 1 V4 M19.5 17 V20" stroke="#fff" stroke-width="1.6"/><rect x="17.5" y="8" width="4" height="5" fill="#fff"/></svg>
<div class="a" style="left:616px;top:1042px;width:1px;height:26px;background:#6a6a6a"></div>
<div class="a" style="left:618px;top:1042px;width:1px;height:26px;background:#3a3a3a"></div>
<svg class="a" style="left:649px;top:1042px" width="29" height="24" viewBox="0 0 29 24"><path d="M0.5 1 H10 L12.5 3.5 H28.5 V23.5 H0.5 Z" fill="#e8a818"/><path d="M0.5 6 H28.5 V23.5 H0.5 Z" fill="#ffd45c"/><path d="M6 12 H23 V24 H18.5 V16 H10.5 V24 H6 Z" fill="#2b8ad8"/></svg>
<svg class="a" style="left:709px;top:1039px" width="32" height="32" viewBox="0 0 32 32"><defs><linearGradient id="eg" x1="0" y1="0" x2="1" y2="1"><stop offset="0" stop-color="#36c3a8"/><stop offset="0.5" stop-color="#1e90e0"/><stop offset="1" stop-color="#0c59a4"/></linearGradient></defs><path d="M16 1 C25 1 31 7.5 31 14.5 C31 19 27.5 21 23.5 21 C19 21 17 19 17.5 16.5 C18 14.5 20 14 20 12 C20 9 17 6.5 12.5 6.5 C6 6.5 1.5 11 1 16 C1.5 7 8 1 16 1 Z" fill="#39c58f"/><path d="M1 16 C1.5 11 6 6.5 12.5 6.5 C17 6.5 20 9 20 12 C20 14 18 14.5 17.5 16.5 C17 19 19 21 23.5 21 C27.5 21 31 19 31 14.5 C31 24 24 31 16 31 C7.5 31 1 24.5 1 16 Z" fill="#1a86d8"/><path d="M1 16 C1.5 11 6 7.5 11 8 C7 10 5.5 14 7 19 C9 25 16 29 23 28 C21 30 18.5 31 16 31 C7.5 31 1 24.5 1 16 Z" fill="#0d5aa7"/></svg>
<div class="a" style="left:758px;top:1030px;width:61px;height:50px;background:#3c3c3c"></div>
<svg class="a" style="left:771px;top:1039px" width="32" height="32" viewBox="0 0 24 24">
 <path d="M2 7 L3 3.5 L9 2 L13 4 L16.5 1.8 L18 6 L22 10 L20.5 14 L22 18 L21 22 L14 21.5 L8.5 22 L2 18 Z" fill="#21d789"/>
 <path d="M13 4 L16.5 1.8 L18 6 Z" fill="#8be04e"/>
 <path d="M18 6 L22 10 L20.5 14 L17 12 Z" fill="#07c3f2"/>
 <path d="M17 12 L20.5 14 L22 18 L21 22 L14 21.5 L9 21 L14 17 Z" fill="#fcf84a"/>
 <path d="M2 15 L7 13 L9 21 L8.5 22 L2 18 Z" fill="#62d96b"/>
 <rect x="6" y="6" width="12" height="12" fill="#000"/>
 <text x="6.6" y="13.2" font-family="Liberation Sans" font-weight="bold" font-size="7.4" fill="#fff">PC</text>
 <rect x="7" y="15" width="5" height="1.4" fill="#bbb"/>
</svg>
<svg class="a" style="left:835px;top:1040px" width="29" height="29" viewBox="0 0 29 29"><circle cx="14.5" cy="14.5" r="14" fill="#db4437"/><path d="M14.5 14.5 L2.4 7.5 A14 14 0 0 0 10.5 28 Z" fill="#0f9d58"/><path d="M14.5 14.5 L10.5 28 A14 14 0 0 0 28.5 14.5 L26.6 7.5 Z" fill="#ffcd40"/><path d="M14.5 7.5 H26.6 L28.5 14.5 Z" fill="#ffcd40"/><circle cx="14.5" cy="14.5" r="6.4" fill="#fff"/><circle cx="14.5" cy="14.5" r="5" fill="#4285f4"/></svg>
<div class="a" style="left:701px;top:1077px;width:51px;height:3px;background:#76b9ed"></div>
<div class="a" style="left:758px;top:1077px;width:61px;height:3px;background:#76b9ed"></div>
<div class="a" style="left:825px;top:1077px;width:51px;height:3px;background:#76b9ed"></div>
<!-- tray -->
<svg class="a" style="left:1523px;top:1044px" width="13" height="22" viewBox="0 0 13 22"><path d="M3 0 V6 M10 0 V6" stroke="#fff" stroke-width="2"/><path d="M0 6 H13 V11 C13 14 10 16 6.5 16 C3 16 0 14 0 11 Z" fill="#fff"/><path d="M6.5 16 V22" stroke="#fff" stroke-width="2.2"/></svg>
<div class="a" style="left:1538px;top:1044px;width:41px;height:22px;border:2px solid #fff;background:#1c9e45"></div>
<div class="a" style="left:1579px;top:1050px;width:3px;height:10px;background:#fff"></div>
<div class="u" style="left:1541px;top:1045px;font-size:13px;color:#fff;line-height:20px;letter-spacing:-0.6px">100%</div>
<svg class="a" style="left:1589px;top:1049px" width="18" height="11" viewBox="0 0 18 11"><path d="M1 10 L9 1.5 L17 10" stroke="#fff" stroke-width="1.5" fill="none"/></svg>
<svg class="a" style="left:1618px;top:1045px" width="22" height="22" viewBox="0 0 22 22"><path d="M1 3 L19 0.5 V17 L1 19.5 Z" stroke="#fff" stroke-width="1.4" fill="none"/><path d="M6 9 A4 4 0 0 1 13 7 M13 11 A4 4 0 0 1 6 13" stroke="#fff" stroke-width="1.3" fill="none"/><circle cx="16" cy="17" r="4.3" fill="#f7a21b"/></svg>
<svg class="a" style="left:1647px;top:1047px" width="22" height="16" viewBox="0 0 22 16"><path d="M3 0 V4 M6 0 V4" stroke="#fff" stroke-width="1.5"/><rect x="1" y="4" width="17" height="10" stroke="#fff" stroke-width="1.5" fill="#fff" fill-opacity="0.85"/><rect x="18.5" y="7" width="2.5" height="4" fill="#fff"/></svg>
<svg class="a" style="left:1679px;top:1046px" width="19" height="18" viewBox="0 0 19 18"><g stroke="#fff" stroke-width="1.3" fill="none"><path d="M1.5 16 A14.5 14.5 0 0 1 16 1.5"/><path d="M5 16 A11 11 0 0 1 16 5"/><path d="M8.5 16 A7.5 7.5 0 0 1 16 8.5"/><path d="M12 16 A4 4 0 0 1 16 12"/></g><circle cx="16" cy="16" r="1.4" fill="#fff"/></svg>
<svg class="a" style="left:1707px;top:1046px" width="22" height="18" viewBox="0 0 22 18"><path d="M1 6 H5 L10 1.5 V16.5 L5 12 H1 Z" stroke="#fff" stroke-width="1.3" fill="none"/><path d="M13 6 A4 4 0 0 1 13 12 M16 3.5 A7.5 7.5 0 0 1 16 14.5 M19 1 A11 11 0 0 1 19 17" stroke="#fff" stroke-width="1.3" fill="none"/></svg>
<div class="u" style="left:1736px;top:1044px;font-size:19px;color:#fff;line-height:22px">中</div>
<div class="u" style="left:1788px;top:1034px;font-size:16px;color:#fff">19:13</div>
<div class="u" style="left:1769px;top:1057px;font-size:16px;color:#fff">2021/3/13</div>
<svg class="a" style="left:1868px;top:1044px" width="32" height="32" viewBox="0 0 32 32"><path d="M1 1 H21 V15 H9 L5 19 V15 H1 Z" stroke="#fff" stroke-width="1.5" fill="none"/><path d="M5 5 H17 M5 8 H17 M5 11 H13" stroke="#fff" stroke-width="1.2"/><circle cx="20" cy="20" r="9" fill="#1c1c1c" stroke="#6e6e6e" stroke-width="1.2"/><text x="20" y="25" text-anchor="middle" font-family="Liberation Sans" font-size="13" font-weight="bold" fill="#fff">4</text></svg>
<div class="a" style="left:1914px;top:1030px;width:1px;height:50px;background:#5a5a5a"></div>
</body></html>
